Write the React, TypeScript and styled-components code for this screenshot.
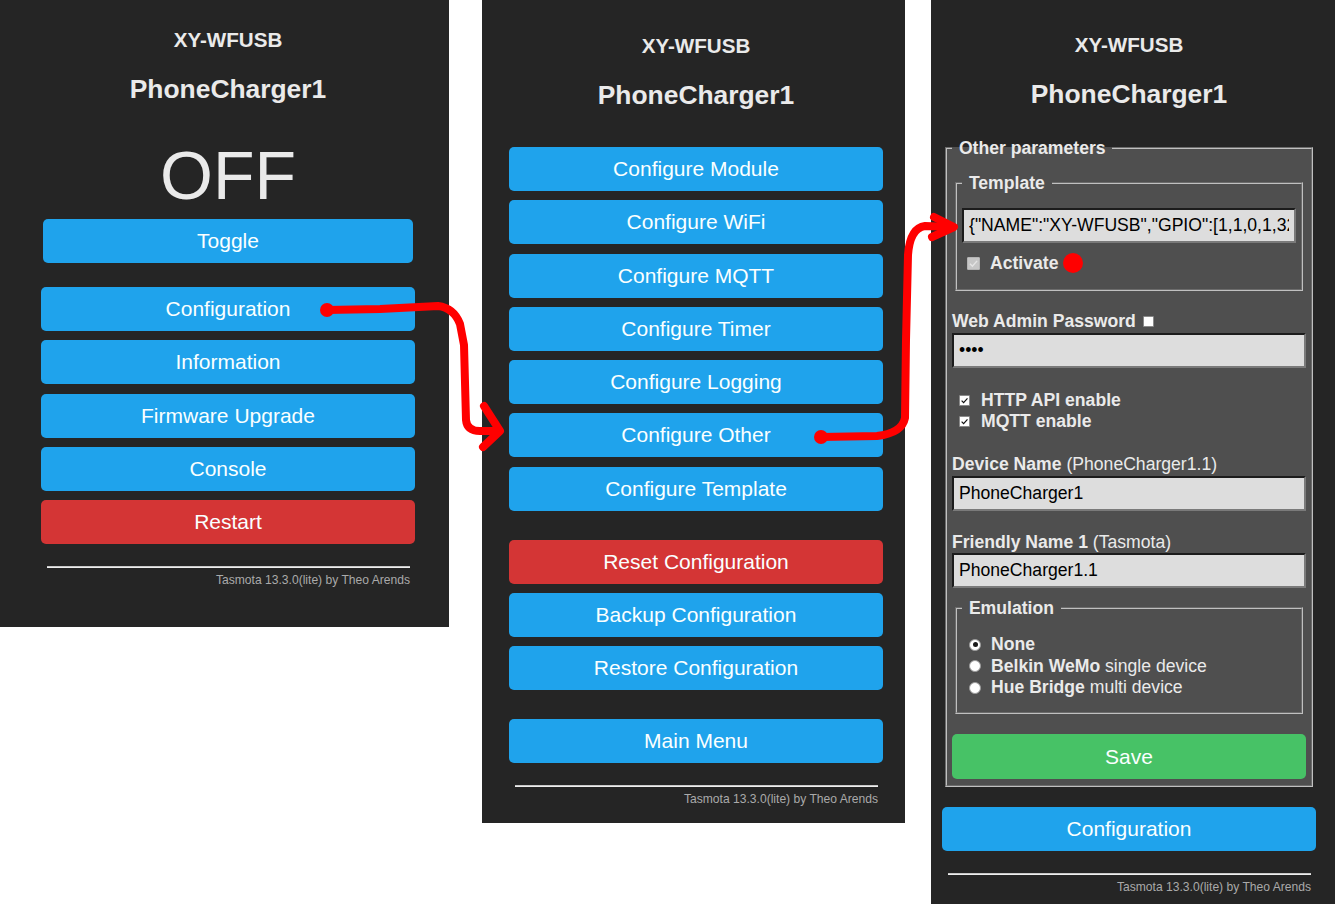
import React from 'react';
import styled, { createGlobalStyle } from 'styled-components';

const Global = createGlobalStyle`
  html, body { margin: 0; padding: 0; background: #fff; }
  body { font-family: "Liberation Sans", Arial, sans-serif; }
  * { box-sizing: border-box; }
`;

const Page = styled.div`
  position: relative;
  display: flex;
  align-items: flex-start;
  width: 1335px;
  height: 904px;
  overflow: hidden;
  background: #fff;
`;

const Panel = styled.div<{ $pl: number; $pr: number; $pt: number; $h: number; $ml: number }>`
  flex: none;
  margin-left: ${(p) => p.$ml}px;
  height: ${(p) => p.$h}px;
  padding: ${(p) => p.$pt}px ${(p) => p.$pr}px 0 ${(p) => p.$pl}px;
  background: #252525;
  color: #eaeaea;
`;

const Column = styled.div`
  width: 374px;
  display: flex;
  flex-direction: column;
`;

const DeviceType = styled.h3`
  margin: 0;
  font-size: 20.6px;
  line-height: 24px;
  font-weight: 700;
  text-align: center;
`;

const DeviceName = styled.h2`
  margin: 22px 0 0;
  font-size: 26.4px;
  line-height: 30px;
  font-weight: 700;
  text-align: center;
`;

const PowerState = styled.div`
  margin-top: 33px;
  font-size: 68px;
  line-height: 76px;
  text-align: center;
`;

const ToggleWrap = styled.div`
  margin-top: 6px;
  padding: 0 2px;
`;

const ButtonGroup = styled.div<{ $mt: number }>`
  margin-top: ${(p) => p.$mt}px;
  display: flex;
  flex-direction: column;
  gap: 9.25px;
`;

const Btn = styled.button<{ $variant?: 'blue' | 'red' | 'green'; $h?: number }>`
  display: block;
  width: 100%;
  height: ${(p) => p.$h ?? 44}px;
  padding: 0;
  border: 0;
  border-radius: 5px;
  background: ${(p) =>
    p.$variant === 'red' ? '#d43535' : p.$variant === 'green' ? '#47c266' : '#1fa3ec'};
  color: #faffff;
  font-family: "Liberation Sans", Arial, sans-serif;
  font-size: 21px;
  line-height: ${(p) => p.$h ?? 44}px;
  text-align: center;
`;

const FooterWrap = styled.div<{ $mt: number }>`
  margin-top: ${(p) => p.$mt}px;
  padding: 0 5px 0 6px;
  text-align: right;
`;

const Rule = styled.hr`
  margin: 0;
  height: 0;
  border: 0;
  border-top: 1px solid #c8c8c8;
  border-bottom: 1px solid #eeeeee;
`;

const Credit = styled.div`
  margin-top: 5px;
  font-size: 12.1px;
  line-height: 14px;
  color: #aaa;
`;

const FieldSet = styled.fieldset<{ $pt: number; $pb: number; $mt?: number }>`
  margin: ${(p) => p.$mt ?? 0}px 3px 0;
  min-width: 0;
  padding: ${(p) => p.$pt}px 5px ${(p) => p.$pb}px;
  border: 2px groove #c0c0c0;
  background: #4f4f4f;
`;

const Legend = styled.legend`
  padding: 0 2px;
  font-size: 17.6px;
  line-height: 20px;
  font-weight: 700;
  color: #eaeaea;
`;

const FieldLabel = styled.div<{ $mt: number }>`
  margin-top: ${(p) => p.$mt}px;
  display: flex;
  align-items: center;
  font-size: 17.6px;
  line-height: 20px;
  white-space: nowrap;
`;

const Strong = styled.b`
  font-weight: 700;
`;

const TextInput = styled.input<{ $mt?: number }>`
  display: block;
  width: 100%;
  height: 35px;
  margin-top: ${(p) => p.$mt ?? 0}px;
  padding: 0 5px;
  border-style: solid;
  border-width: 2px;
  border-color: #1c1c1c #7a7a7a #7a7a7a #1c1c1c;
  border-radius: 0;
  background: #dddddd;
  color: #000;
  font-family: "Liberation Sans", Arial, sans-serif;
  font-size: 17.6px;
  outline: none;
`;

const OptionRow = styled.div<{ $lh: number; $mt?: number }>`
  margin-top: ${(p) => p.$mt ?? 0}px;
  display: flex;
  align-items: center;
  height: ${(p) => p.$lh}px;
  font-size: 17.6px;
  white-space: nowrap;
`;

const Box = styled.span<{ $size: number; $ml: number; $mr: number; $disabled?: boolean }>`
  flex: none;
  display: inline-flex;
  align-items: center;
  justify-content: center;
  width: ${(p) => p.$size}px;
  height: ${(p) => p.$size}px;
  margin: 0 ${(p) => p.$mr}px 0 ${(p) => p.$ml}px;
  background: ${(p) => (p.$disabled ? '#c6c6c6' : '#fff')};
  border: 1px solid ${(p) => (p.$disabled ? '#b4b4b4' : '#8a8a8a')};
  border-radius: 1px;
`;

const RadioDot = styled.span<{ $checked?: boolean }>`
  flex: none;
  display: inline-flex;
  align-items: center;
  justify-content: center;
  width: 12px;
  height: 12px;
  margin: 0 10px 0 7px;
  border-radius: 50%;
  background: #fff;
  border: 1px solid #9a9a9a;
  &::after {
    content: '';
    width: 5px;
    height: 5px;
    border-radius: 50%;
    background: ${(p) => (p.$checked ? '#1a1a1a' : 'transparent')};
  }
`;

const Overlay = styled.svg`
  position: absolute;
  left: 0;
  top: 0;
  pointer-events: none;
`;

const Check = ({ color, size }: { color: string; size: number }) => (
  <svg width={size} height={size} viewBox="0 0 10 10">
    <path d="M1.8 5.2 L4 7.4 L8.3 2.6" fill="none" stroke={color} strokeWidth="1.3" />
  </svg>
);

const Footer = ({ mt }: { mt: number }) => (
  <FooterWrap $mt={mt}>
    <Rule />
    <Credit>Tasmota 13.3.0(lite) by Theo Arends</Credit>
  </FooterWrap>
);

const Header = () => (
  <>
    <DeviceType>XY-WFUSB</DeviceType>
    <DeviceName>PhoneCharger1</DeviceName>
  </>
);

const TEMPLATE =
  '{"NAME":"XY-WFUSB","GPIO":[1,1,0,1,32,0,0,0,224,288,0,0,0,0],"FLAG":0,"BASE":18}';

export default function App() {
  return (
    <>
      <Global />
      <Page>
        <Panel $ml={0} $pl={41} $pr={34} $pt={28} $h={627}>
          <Column>
            <Header />
            <PowerState>OFF</PowerState>
            <ToggleWrap>
              <Btn>Toggle</Btn>
            </ToggleWrap>
            <ButtonGroup $mt={24}>
              <Btn>Configuration</Btn>
              <Btn>Information</Btn>
              <Btn>Firmware Upgrade</Btn>
              <Btn>Console</Btn>
              <Btn $variant="red">Restart</Btn>
            </ButtonGroup>
            <Footer mt={22} />
          </Column>
        </Panel>

        <Panel $ml={33} $pl={27} $pr={22} $pt={34} $h={823}>
          <Column>
            <Header />
            <ButtonGroup $mt={37}>
              <Btn>Configure Module</Btn>
              <Btn>Configure WiFi</Btn>
              <Btn>Configure MQTT</Btn>
              <Btn>Configure Timer</Btn>
              <Btn>Configure Logging</Btn>
              <Btn>Configure Other</Btn>
              <Btn>Configure Template</Btn>
            </ButtonGroup>
            <ButtonGroup $mt={29}>
              <Btn $variant="red">Reset Configuration</Btn>
              <Btn>Backup Configuration</Btn>
              <Btn>Restore Configuration</Btn>
            </ButtonGroup>
            <ButtonGroup $mt={28.5}>
              <Btn>Main Menu</Btn>
            </ButtonGroup>
            <Footer mt={22} />
          </Column>
        </Panel>

        <Panel $ml={26} $pl={11} $pr={19} $pt={33} $h={904}>
          <Column>
            <Header />
            <FieldSet $mt={29} $pt={15} $pb={6}>
              <Legend>{'\u00a0Other parameters\u00a0'}</Legend>
              <FieldSet $pt={15} $pb={16}>
                <Legend>{'\u00a0Template\u00a0'}</Legend>
                <TextInput readOnly value={TEMPLATE} />
                <OptionRow $lh={20} $mt={10}>
                  <Box $size={13} $ml={5} $mr={10} $disabled>
                    <Check color="#e4e4e4" size={11} />
                  </Box>
                  <Strong>Activate</Strong>
                </OptionRow>
              </FieldSet>
              <FieldLabel $mt={20}>
                <Strong>Web Admin Password</Strong>
                <Box $size={11} $ml={7} $mr={0} />
              </FieldLabel>
              <TextInput type="password" readOnly value="1234" $mt={2} />
              <OptionRow $lh={21} $mt={22}>
                <Box $size={11} $ml={7} $mr={11}>
                  <Check color="#111" size={9} />
                </Box>
                <Strong>HTTP API enable</Strong>
              </OptionRow>
              <OptionRow $lh={21}>
                <Box $size={11} $ml={7} $mr={11}>
                  <Check color="#111" size={9} />
                </Box>
                <Strong>MQTT enable</Strong>
              </OptionRow>
              <FieldLabel $mt={22}>
                <Strong>Device Name</Strong>&nbsp;(PhoneCharger1.1)
              </FieldLabel>
              <TextInput readOnly value="PhoneCharger1" $mt={2} />
              <FieldLabel $mt={21}>
                <Strong>Friendly Name 1</Strong>&nbsp;(Tasmota)
              </FieldLabel>
              <TextInput readOnly value="PhoneCharger1.1" $mt={1} />
              <FieldSet $mt={10} $pt={16} $pb={13}>
                <Legend>{'\u00a0Emulation\u00a0'}</Legend>
                <OptionRow $lh={21.5}>
                  <RadioDot $checked />
                  <Strong>None</Strong>
                </OptionRow>
                <OptionRow $lh={21.5}>
                  <RadioDot />
                  <Strong>Belkin WeMo</Strong>&nbsp;single device
                </OptionRow>
                <OptionRow $lh={21.5}>
                  <RadioDot />
                  <Strong>Hue Bridge</Strong>&nbsp;multi device
                </OptionRow>
              </FieldSet>
              <ButtonGroup $mt={20}>
                <Btn $variant="green" $h={45}>Save</Btn>
              </ButtonGroup>
            </FieldSet>
            <ButtonGroup $mt={20}>
              <Btn>Configuration</Btn>
            </ButtonGroup>
            <Footer mt={22} />
          </Column>
        </Panel>

        <Overlay width={1335} height={904} viewBox="0 0 1335 904">
          <g
            stroke="#ff0000"
            strokeWidth={8}
            fill="none"
            strokeLinecap="round"
            strokeLinejoin="round"
          >
            <path d="M327 310 L380 309 L438 306 Q454 308 460 324 L464 345 L466 420 Q467 431 480 431 L498 431" />
            <path d="M484 406 L500 431 L483 447" />
            <path d="M821 437 L877 436 Q902 433 905 418 L906 340 L908 255 Q910 228 925 226 L952 227" />
            <path d="M934 217 L954 227 L932 237" />
          </g>
          <circle cx={327} cy={310} r={7} fill="#ff0000" />
          <circle cx={821} cy={437} r={7} fill="#ff0000" />
          <circle cx={1073} cy={263} r={10} fill="#ff0000" />
        </Overlay>
      </Page>
    </>
  );
}
